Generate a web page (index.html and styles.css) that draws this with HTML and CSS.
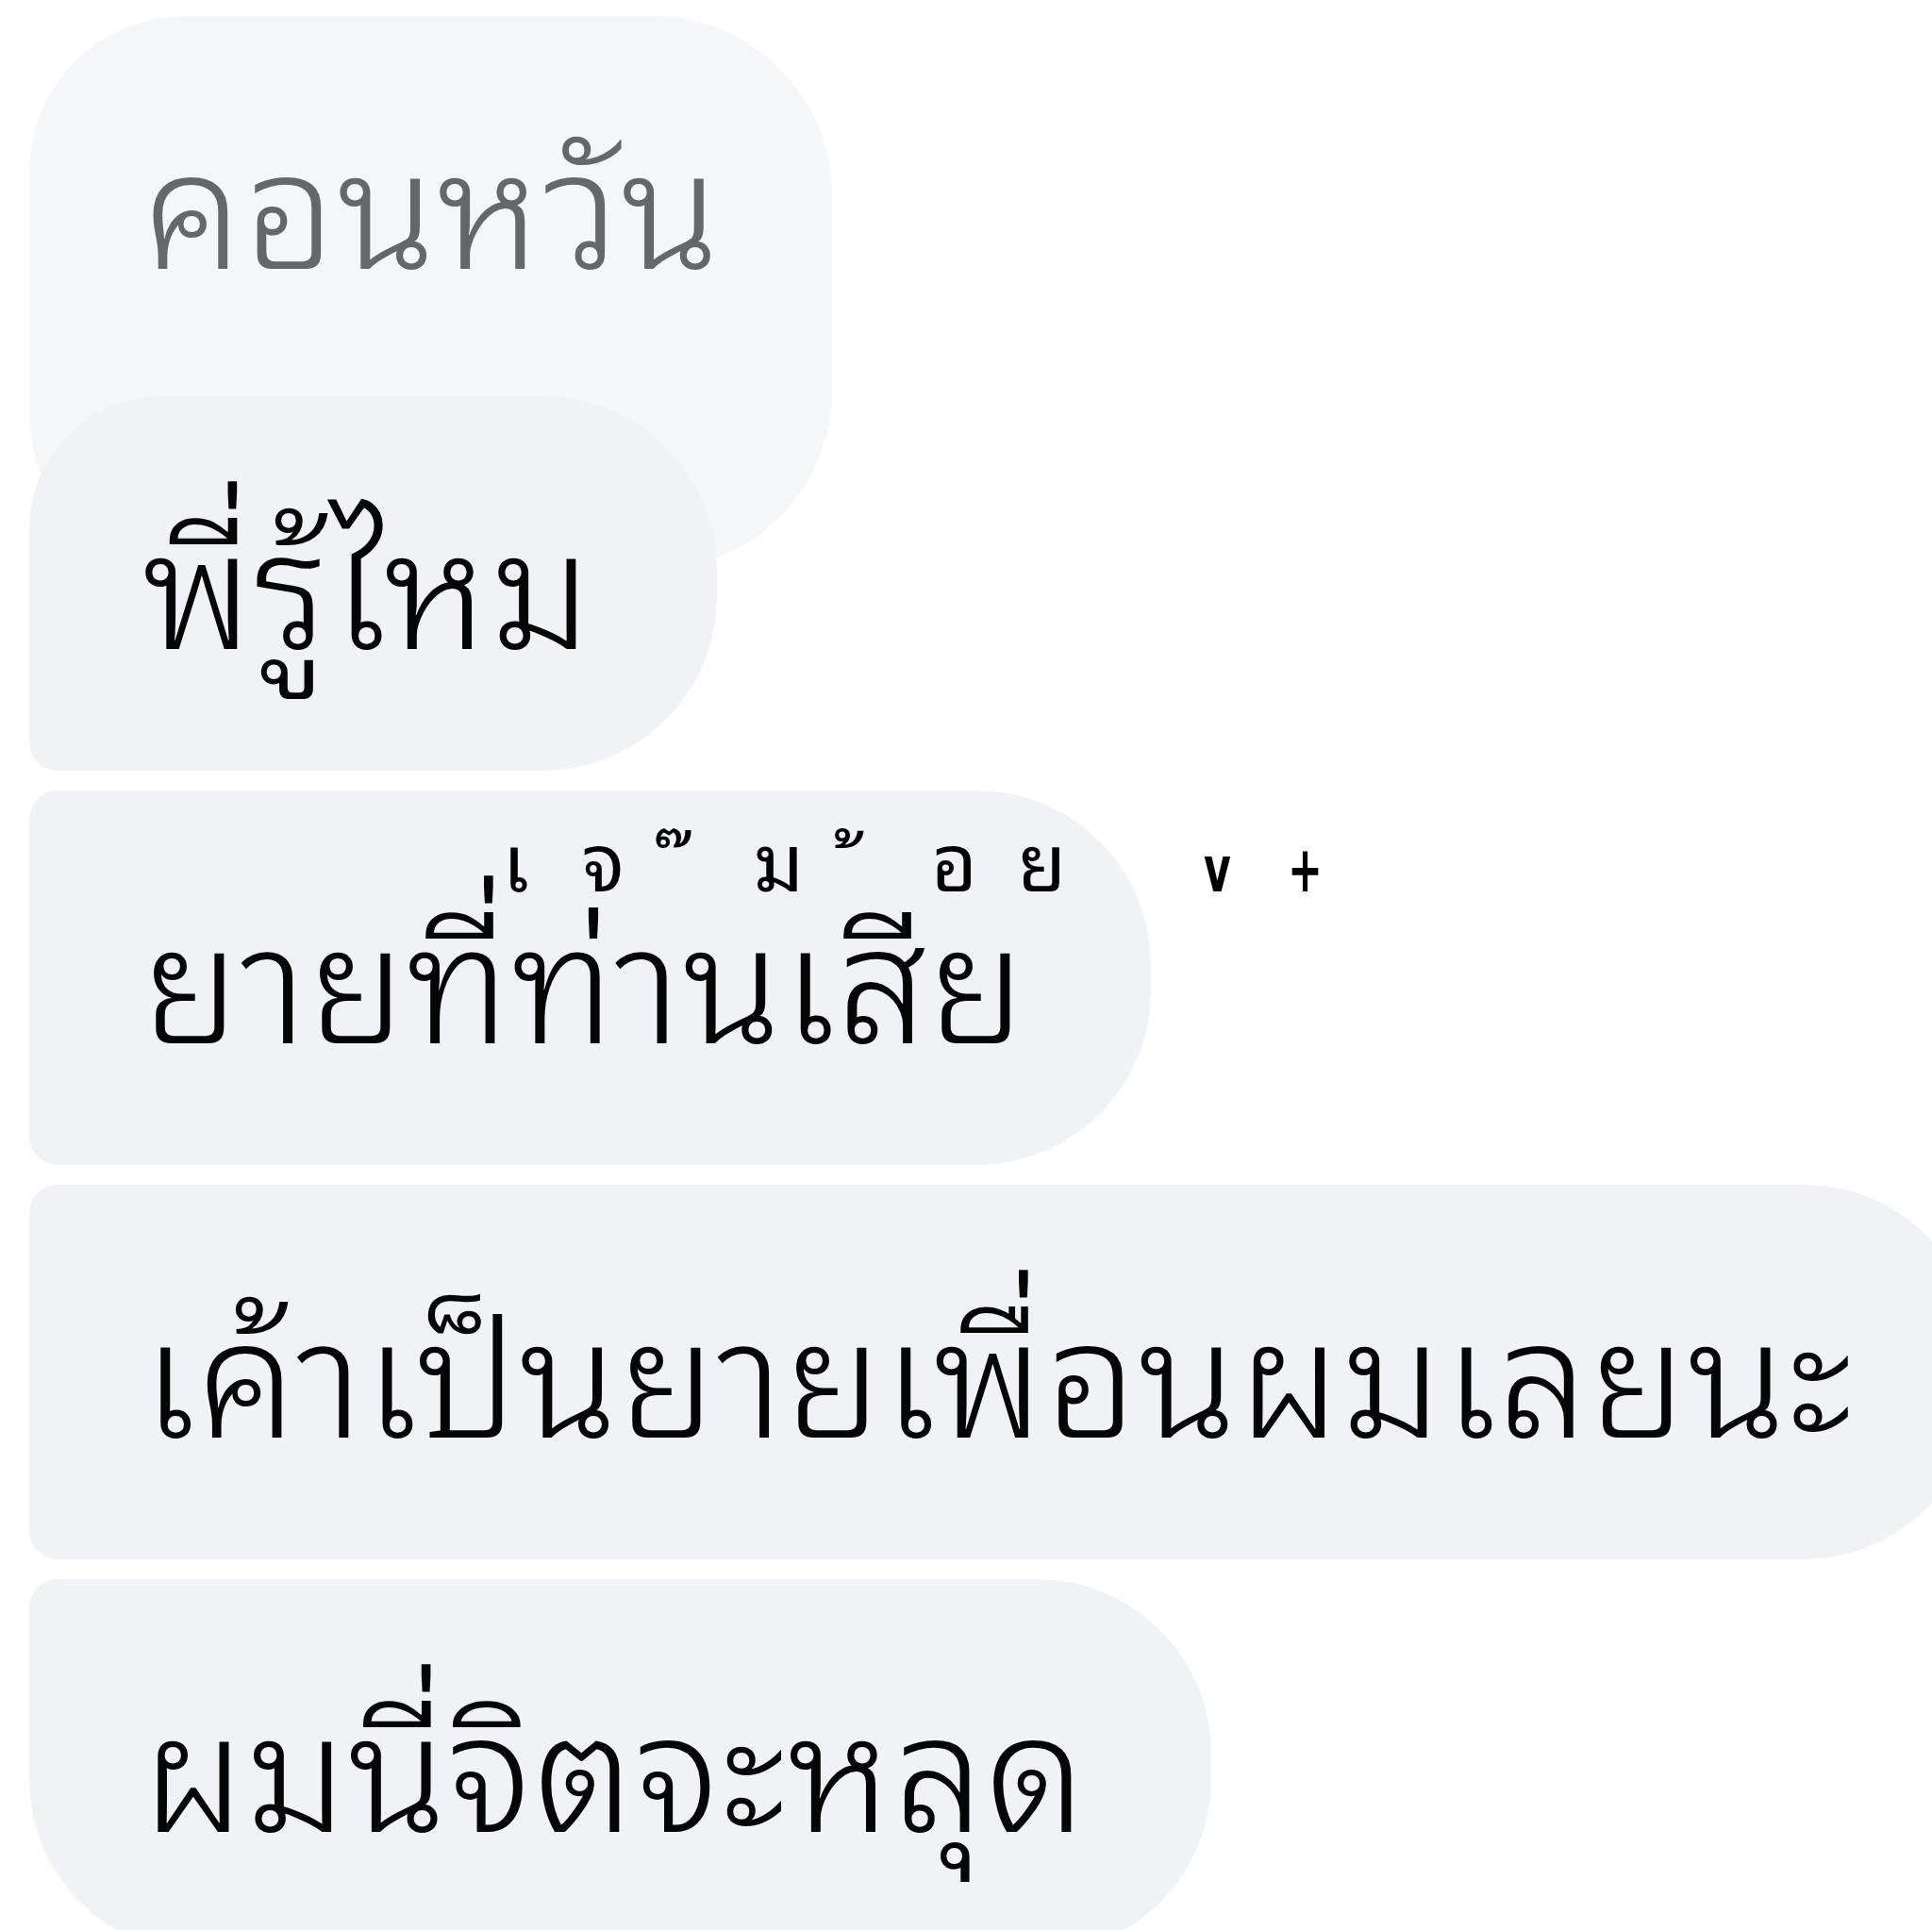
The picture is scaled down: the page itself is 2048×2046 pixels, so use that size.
FILE: index.html
```html
<!DOCTYPE html>
<html lang="th">
<head>
    <meta charset="UTF-8">
    <meta name="viewport" content="width=device-width, initial-scale=1.0">
    <title>Chat</title>
    <link rel="stylesheet" href="styles.css">
</head>
<body>
    <div class="chat-thread">
        <div class="bubble bubble-quoted">คอนหวัน</div>
        <div class="bubble bubble-first">พี่รู้ไหม</div>
        <div class="bubble bubble-middle">ยายที่ท่านเสีย</div>
        <div class="bubble bubble-middle">เค้าเป็นยายเพื่อนผมเลยนะ</div>
        <div class="bubble bubble-last">ผมนี่จิตจะหลุด</div>

        <!-- watermark sits on top of the third bubble -->
        <div class="watermark">
            <span class="wm-char">เ</span>
            <span class="wm-char">จ</span>
            <span class="wm-char wm-mark">&#x0E4A;</span>
            <span class="wm-char">ม</span>
            <span class="wm-char wm-mark">&#x0E49;</span>
            <span class="wm-char">อ</span>
            <span class="wm-char">ย</span>
            <span class="wm-gap"></span>
            <span class="wm-char wm-bold">v</span>
            <span class="wm-char wm-bold">+</span>
        </div>
    </div>
</body>
</html>
```

FILE: styles.css
```css
html {
    overflow: hidden;
}

body {
    margin: 0;
    background-color: #ffffff;
    font-family: "Noto Sans Thai Looped", "Noto Sans Thai", sans-serif;
}

.chat-thread {
    position: relative;
    padding: 17px 0 0 31px;
    display: flex;
    flex-direction: column;
    align-items: flex-start;
    gap: 21px;
}

.bubble {
    position: relative;
    box-sizing: border-box;
    height: 397px;
    padding: 0 132px 16px 120px;
    font-size: 172px;
    font-weight: 350;
    letter-spacing: 1.5px;
    line-height: 381px;
    color: #050505;
    background-color: #f0f2f5;
    white-space: nowrap;
    border-radius: 30px 185px 185px 30px;
}

.bubble-quoted {
    height: 587px;
    margin-bottom: -205px;
    padding-right: 118px;
    color: #65676b;
    background-color: #f5f6f8;
    border-radius: 165px 190px 190px 165px;
}

.bubble-first {
    border-radius: 140px 185px 185px 30px;
}

.bubble-last {
    border-radius: 30px 185px 185px 185px;
}

.watermark {
    position: absolute;
    left: 500px;
    top: 857px;
    display: flex;
    align-items: baseline;
    font-size: 84px;
    line-height: 100px;
    color: #000000;
}

.wm-char {
    display: inline-block;
    width: 93px;
    text-align: center;
}

.wm-mark {
    position: relative;
    top: 8px;
}

.wm-gap {
    width: 93px;
}

.wm-bold {
    font-family: "DejaVu Sans", sans-serif;
    font-weight: bold;
    font-size: 68px;
    transform: scaleX(0.65);
}
```
